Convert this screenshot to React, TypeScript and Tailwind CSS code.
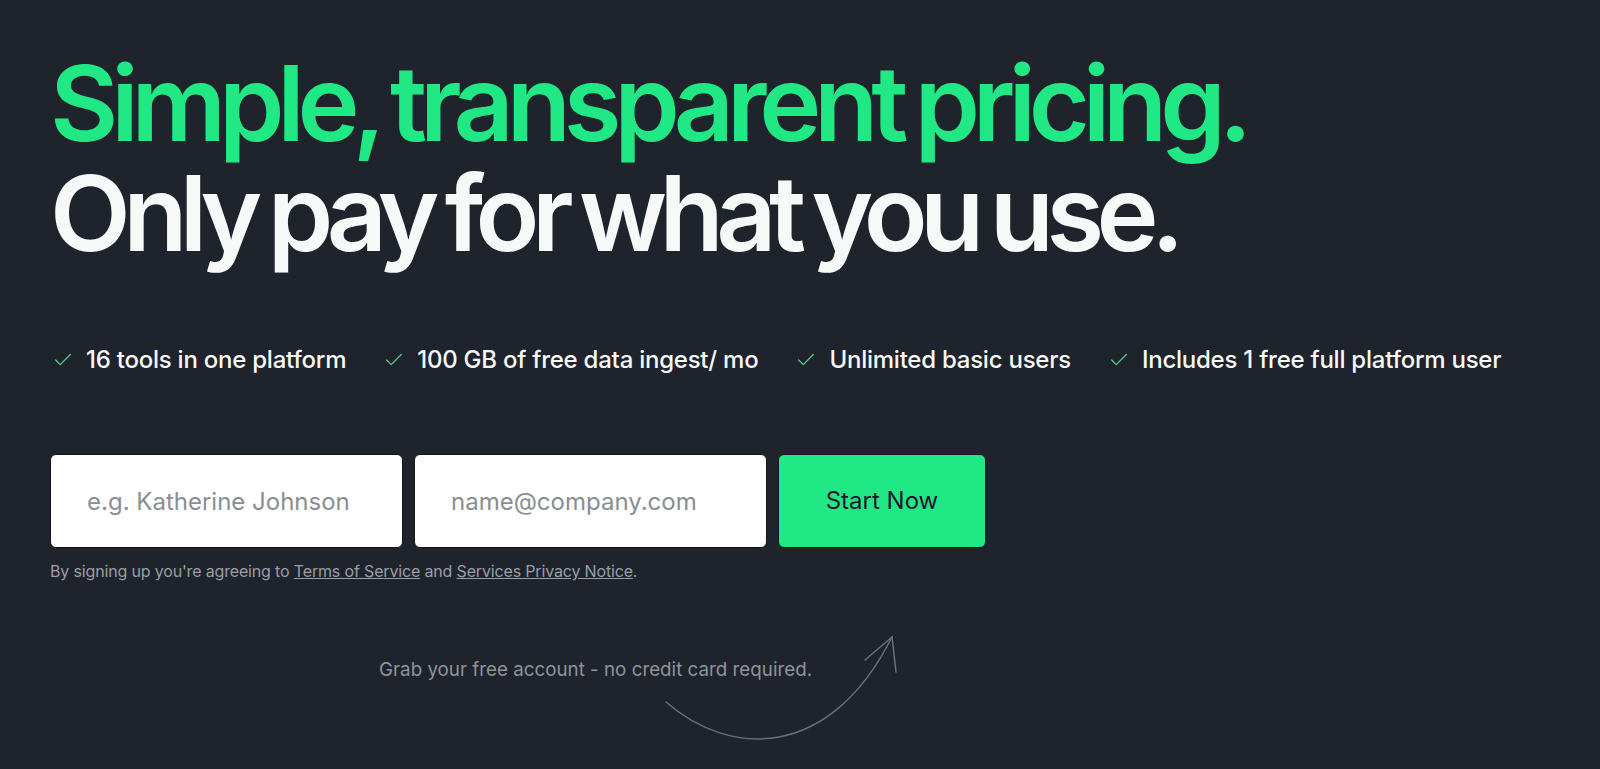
import { Check } from "lucide-react";

const features = [
    "16 tools in one platform",
    "100 GB of free data ingest/ mo",
    "Unlimited basic users",
    "Includes 1 free full platform user",
];

export default function App() {
    return (
        <div className="min-h-[769px] w-full bg-[#1f232c] font-['Inter',sans-serif] overflow-hidden">
            <div className="pl-[50px] pt-[48px]">
                <h1 className="text-[105px] leading-[110px] font-semibold [word-spacing:-6px]">
                    <span className="block text-[#1fe884] tracking-[-0.068em]">Simple, transparent pricing.</span>
                    <span className="block text-[#f7f9f9] tracking-[-0.072em]">Only pay for what you use.</span>
                </h1>

                <ul className="flex items-center gap-[37px] mt-[76px] pl-[2px]">
                    {features.map((f) => (
                        <li key={f} className="flex items-center gap-[12px]">
                            <Check size={22} strokeWidth={1.4} className="text-[#4fd18b]" />
                            <span className="text-[24px] leading-[32px] font-medium text-[#f7f9f9] tracking-[-0.01em]">
                                {f}
                            </span>
                        </li>
                    ))}
                </ul>

                <form className="flex gap-[11px] mt-[78px]" onSubmit={(e) => e.preventDefault()}>
                    <input
                        type="text"
                        placeholder="e.g. Katherine Johnson"
                        className="w-[353px] h-[94px] bg-white border border-[#15121c] rounded-md pl-[36px] text-[24px] text-[#1f232c] placeholder:text-[#898e93] outline-none"
                    />
                    <input
                        type="email"
                        placeholder="name@company.com"
                        className="w-[353px] h-[94px] bg-white border border-[#15121c] rounded-md pl-[36px] text-[24px] text-[#1f232c] placeholder:text-[#898e93] outline-none"
                    />
                    <button
                        type="submit"
                        className="w-[208px] h-[94px] bg-[#1fe884] border border-[#1a1030] rounded-md text-[24px] text-[#1c1530]"
                    >
                        Start Now
                    </button>
                </form>

                <p className="mt-[13px] text-[16px] leading-[20px] tracking-[-0.01em] text-[#9a9fa5]">
                    By signing up you're agreeing to{" "}
                    <a href="#" className="underline">Terms of Service</a> and{" "}
                    <a href="#" className="underline">Services Privacy Notice</a>.
                </p>

                <div className="relative mt-[75px] ml-[329px] w-[560px] h-[90px]">
                    <p className="text-[18.8px] leading-[28px] text-[#8f949a]">
                        Grab your free account - no credit card required.
                    </p>
                    <svg
                        className="absolute left-[280px] top-[-23px]"
                        width="250"
                        height="110"
                        viewBox="0 0 250 110"
                        fill="none"
                        stroke="#6b7078"
                        strokeWidth="1.5"
                        strokeLinecap="round"
                    >
                        <path d="M7 69 C70 124 170 129 233 4" />
                        <path d="M233 4 L206 27" />
                        <path d="M233 4 L237 39" />
                    </svg>
                </div>
            </div>
        </div>
    );
}
